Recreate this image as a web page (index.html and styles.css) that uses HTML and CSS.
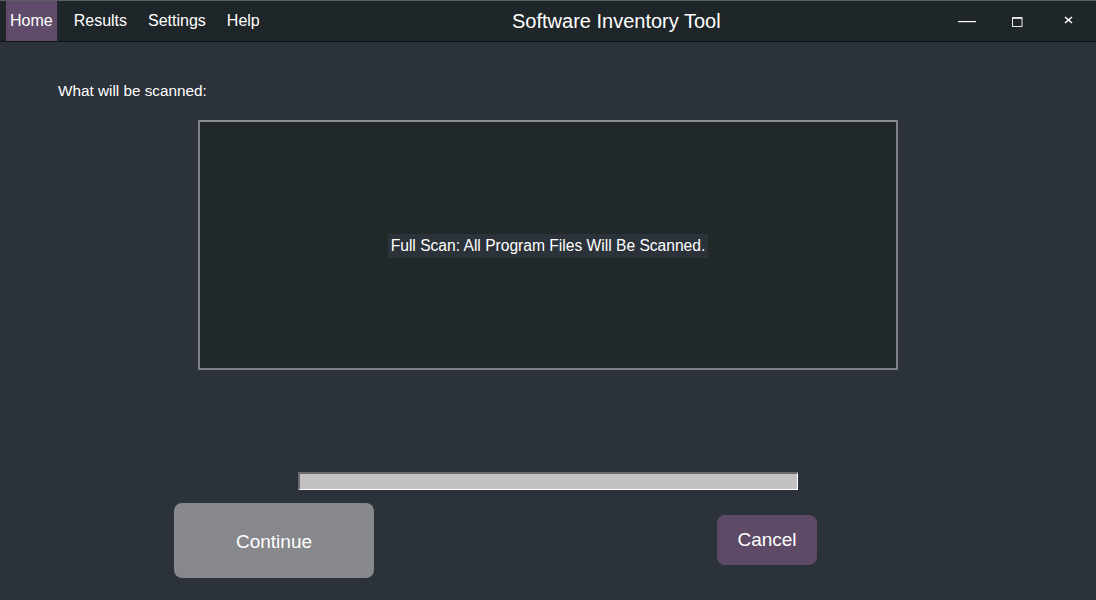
FILE: index.html
```html
<!DOCTYPE html>
<html>
<head>
<meta charset="utf-8">
<link rel="stylesheet" href="styles.css">
</head>
<body>
<div class="window">
  <header class="titlebar">
    <nav class="menu">
      <span class="menu-item active">Home</span>
      <span class="menu-item">Results</span>
      <span class="menu-item">Settings</span>
      <span class="menu-item">Help</span>
    </nav>
    <div class="title">Software Inventory Tool</div>
    <div class="controls">
      <span class="ctl min"><svg width="18" height="2" viewBox="0 0 18 2"><rect width="18" height="1.2" fill="#ffffff"/></svg></span>
      <span class="ctl max"><svg width="11" height="10" viewBox="0 0 11 10"><rect x="0.5" y="0.5" width="9.5" height="9" fill="none" stroke="#e8e8e8" stroke-width="1"/><rect x="0.5" y="0.5" width="9.5" height="1.4" fill="#e8e8e8"/></svg></span>
      <span class="ctl close"><svg width="9" height="8" viewBox="0 0 9 8"><path d="M1 1 L8 7 M8 1 L1 7" stroke="#ffffff" stroke-width="1.6"/></svg></span>
    </div>
  </header>
  <main class="content">
    <div class="label">What will be scanned:</div>
    <div class="scan-box">
      <span class="scan-text">Full Scan: All Program Files Will Be Scanned.</span>
    </div>
    <div class="progress"></div>
    <div class="buttons">
      <button class="btn continue">Continue</button>
      <button class="btn cancel">Cancel</button>
    </div>
  </main>
</div>
</body>
</html>
```
FILE: styles.css
```css
html, body {
  margin: 0;
  padding: 0;
  background: #2b3239;
  font-family: "Liberation Sans", Arial, sans-serif;
  color: #ffffff;
}
.window {
  width: 1096px;
  height: 600px;
  display: flex;
  flex-direction: column;
  overflow: hidden;
}
.titlebar {
  height: 40px;
  border-top: 1px solid #5a5e60;
  border-bottom: 1px solid #111517;
  background: #1f2629;
  display: flex;
  align-items: stretch;
}
.menu {
  display: flex;
  padding-left: 6px;
  width: 506px;
  box-sizing: border-box;
}
.menu-item {
  font-size: 16px;
  display: flex;
  align-items: center;
  padding: 0 4px;
  margin-right: 13px;
}
.menu-item.active {
  background: #604c6a;
}
.title {
  font-size: 20px;
  display: flex;
  align-items: center;
  padding-left: 6px;
}
.controls {
  flex: 1;
  display: flex;
  justify-content: flex-end;
  align-items: center;
}
.ctl {
  width: 50px;
  display: flex;
  justify-content: center;
  align-items: center;
}
.ctl.min { margin-top: 2px; }
.ctl.max { margin-top: 2px; margin-right: 1px; }
.ctl.close { margin-top: -2px; margin-right: 3px; }
.content {
  flex: 1;
  display: flex;
  flex-direction: column;
  align-items: center;
}
.label {
  align-self: flex-start;
  margin-left: 58px;
  margin-top: 40px;
  font-size: 15.3px;
  height: 17px;
}
.scan-box {
  margin-top: 21px;
  width: 696px;
  height: 246px;
  border: 2px solid #7e8183;
  border-top-color: #8a8c8e;
  background: #212829;
  display: flex;
  justify-content: center;
  align-items: center;
}
.scan-text {
  background: #2b3239;
  font-size: 15.6px;
  padding: 3px 3px 4px 3px;
  line-height: 17px;
  margin-top: 1px;
}
.progress {
  margin-top: 102px;
  width: 497px;
  height: 15px;
  background: #c2c2c2;
  border-top: 2px solid #6a6a6a;
  border-left: 2px solid #6a6a6a;
  border-right: 1px solid #ffffff;
  border-bottom: 1px solid #ffffff;
}
.buttons {
  align-self: flex-start;
  margin-left: 174px;
  width: 643px;
  margin-top: 13px;
  display: flex;
  justify-content: space-between;
  align-items: flex-start;
}
.btn {
  font-family: "Liberation Sans", Arial, sans-serif;
  color: #ffffff;
  border: none;
  border-radius: 8px;
  font-size: 19px;
  padding: 0;
}
.btn.continue {
  width: 200px;
  height: 75px;
  background: #87888c;
  padding-top: 3px;
}
.btn.cancel {
  width: 100px;
  height: 50px;
  background: #5e4a66;
  margin-top: 12px;
}
```
